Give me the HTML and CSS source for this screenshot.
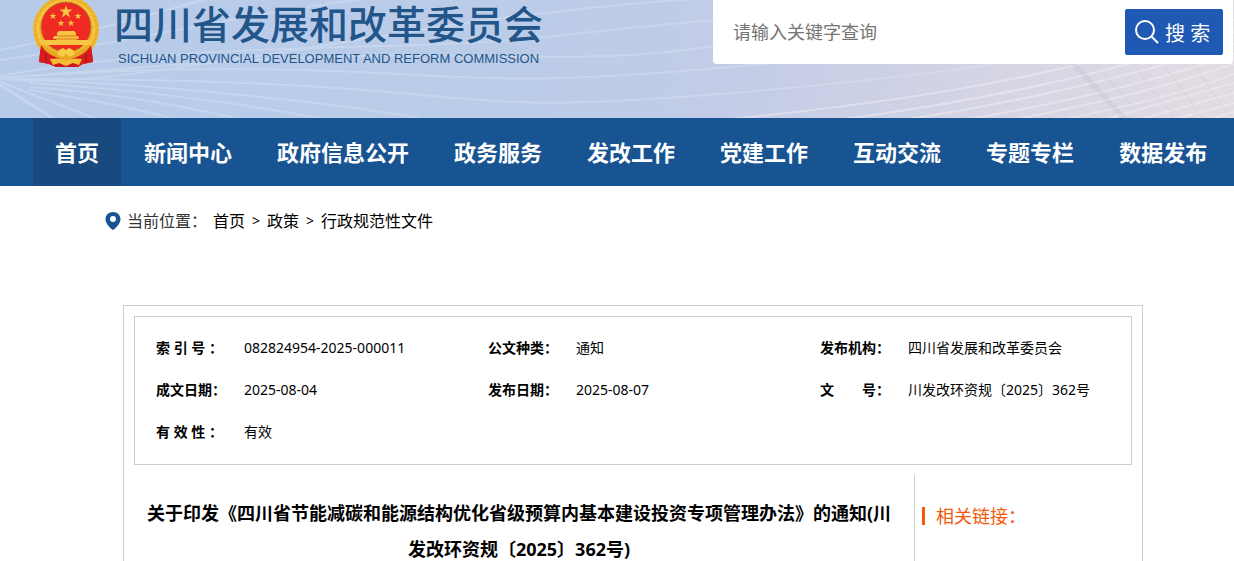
FILE: index.html
```html
<!DOCTYPE html>
<html lang="zh-CN">
<head>
  <meta charset="UTF-8">
  <meta name="viewport" content="width=device-width, initial-scale=1.0">
  <title>四川省发展和改革委员会</title>
  <link rel="stylesheet" href="styles.css">
</head>
<body>

  <!-- Header: logo and search -->
  <header class="header">
    <svg class="header-bg" viewBox="0 0 1234 118" preserveAspectRatio="none" aria-hidden="true">
      <g fill="none" stroke="#dfeaf8" stroke-width="2" opacity="0.35">
        <path d="M0 78 C60 90 200 65 420 30 S800 -5 960 -20"/>
        <path d="M0 60 C150 40 250 10 420 -8"/>
        <path d="M0 50 C80 35 150 15 220 -5"/>
        <path d="M0 76 C140 50 300 48 420 45 S600 28 720 20 S1100 -10 1234 -40"/>
        <path d="M0 78 C160 66 300 52 480 56 S680 50 800 34 S1100 0 1234 -20"/>
        <path d="M0 78 C160 66 300 68 400 74 S560 82 720 68 S1100 30 1234 -8"/>
        <path d="M0 79 C160 78 300 84 400 93 S540 109 720 94 S1080 60 1234 10"/>
        <path d="M30 80 C140 84 300 98 420 118"/>
        <path d="M30 83 C120 88 240 102 340 122"/>
        <path d="M30 87 C100 92 180 104 260 124"/>
        <path d="M30 90 C80 98 140 108 190 124"/>
        <path d="M0 82 L110 124"/>
        <path d="M0 85 L56 120" stroke-width="3"/>
      </g>
      <g fill="none" stroke="#f3eff4" stroke-width="2" opacity="0.5">
        <path d="M700 122 C880 105 1060 80 1234 20"/>
        <path d="M820 122 C960 105 1110 75 1234 32"/>
        <path d="M890 122 C1010 104 1130 77 1234 44"/>
        <path d="M950 122 C1050 106 1150 83 1234 54"/>
        <path d="M1000 122 C1090 106 1160 89 1234 64"/>
        <path d="M1050 122 C1120 108 1180 95 1234 74"/>
        <path d="M1095 122 L1234 83"/>
        <path d="M1130 122 L1234 93"/>
        <path d="M1165 122 L1234 103"/>
        <path d="M1200 122 L1234 112"/>
      </g>
      <g fill="none" stroke="#aeb0c6" opacity="0.2">
        <path d="M1070 60 L1126 120" stroke-width="5"/>
        <path d="M1092 60 L1144 120M1130 60 L1176 120M1160 60 L1204 120M1190 60 L1230 116"/>
      </g>
    </svg>

    <a class="logo" href="#">
      <svg class="emblem" viewBox="0 0 68 70" aria-hidden="true">
        <path d="M9 45 L7 64 L17 66 L24 69 L46 69 L51 66 L61 64 L59 45 Z" fill="#c9171b"/>
        <circle cx="34" cy="31" r="33" fill="#f0b62f"/>
        <circle cx="34" cy="31" r="31" fill="none" stroke="#e0a323" stroke-dasharray="2 3"/>
        <circle cx="34" cy="31" r="28" fill="none" stroke="#f8ca47" stroke-width="2" stroke-dasharray="5 1"/>
        <circle cx="34" cy="29" r="25" fill="#ee2a22" stroke="#b9801c"/>
        <path fill="#f6c543" d="M34 7 L35.5 11.500 L40.5 11.500 L36.5 14.500 L38 19.500 L34 16.500 L30 19.500 L31.5 14.500 L27.5 11.500 L32.5 11.500 Z"/>
        <g fill="#f6c543">
          <path id="star" d="M21 14.500 L21.8 17 L24.500 17 L22.400 18.600 L23.200 21.200 L21 19.600 L18.800 21.200 L19.600 18.600 L17.500 17 L20.200 17 Z"/>
          <use href="#star" x="25"/>
          <use href="#star" x="8" y="7"/>
          <use href="#star" x="18" y="7"/>
        </g>
        <path fill="#f6c543" d="M25 35 L27 33 H42 L44 35 V38 H25 Z M22 38 H46 L47 41 H21 Z M24 41 H45 V42 H58 L56 47 H12 L10 42 H24 Z"/>
        <path d="M25 38 H44 M24 41 H45" stroke="#d6781b"/>
        <path fill="#e9a823" d="M11 46 C17 53 26 56 34 56 S51 53 57 46 L58 51 C52 59 43 62 34 62 S16 59 10 51 Z"/>
        <path fill="#f8cc45" d="M27 52 L31 50 L34 52 L37 50 L41 52 L43 56 L38 59 L34 56 L30 59 L25 56 Z"/>
        <path fill="#d81d1e" d="M9 47 C14 56 23 59 29 61 L24 69 L17 66 L7 64 Z M59 47 C54 56 45 59 39 61 L44 69 L51 66 L61 64 Z"/>
        <path fill="#f5bd35" d="M18 61 C25 60 29 60 34 64 C39 60 43 60 50 61 L47 67 L41 65 L34 68 L27 65 L21 67 Z"/>
        <path d="M14 56 V65 M54 56 V65" stroke="#98131a"/>
      </svg>
      <span class="logo-text">
        <span class="logo-cn">四川省发展和改革委员会</span>
        <span class="logo-en">SICHUAN PROVINCIAL DEVELOPMENT AND REFORM COMMISSION</span>
      </span>
    </a>

    <form class="search">
      <input class="search-input" type="text" placeholder="请输入关键字查询" aria-label="请输入关键字查询">
      <button class="search-btn" type="submit">
        <svg class="search-icon" viewBox="0 0 24 24" aria-hidden="true">
          <circle cx="10" cy="10" r="9"/>
          <path d="M16.5 16.5 L23 23"/>
        </svg>
        搜 索
      </button>
    </form>
  </header>

  <!-- Main navigation -->
  <nav class="nav">
    <a class="active" href="#">首页</a>
    <a href="#">新闻中心</a>
    <a href="#">政府信息公开</a>
    <a href="#">政务服务</a>
    <a href="#">发改工作</a>
    <a href="#">党建工作</a>
    <a href="#">互动交流</a>
    <a href="#">专题专栏</a>
    <a href="#">数据发布</a>
  </nav>

  <!-- Breadcrumb -->
  <div class="crumbs">
    <svg class="pin" viewBox="0 0 16 18" aria-hidden="true">
      <path fill="#185392" fill-rule="evenodd" d="M8 0 C3.500 0 .5 3.200 .5 7.200 C.5 11 4 15 8 18 C12 15 15.500 11 15.500 7.200 C15.500 3.200 12.500 0 8 0 Z M8 4 A3 3 0 1 1 8 10 A3 3 0 1 1 8 4 Z"/>
    </svg>
    <span class="crumbs-label">当前位置：</span>
    <span class="crumbs-path">
      <a href="#">首页</a>
      <span class="sep">&gt;</span>
      <a href="#">政策</a>
      <span class="sep">&gt;</span>
      <a href="#">行政规范性文件</a>
    </span>
  </div>

  <main class="doc">
    <!-- Document details -->
    <div class="info">
      <table class="info-table">
        <colgroup>
          <col class="col-label"><col>
          <col class="col-label"><col>
          <col class="col-label"><col>
        </colgroup>
        <tr>
          <th scope="row">索 引 号 ：</th>
          <td>082824954-2025-000011</td>
          <th scope="row">公文种类：</th>
          <td>通知</td>
          <th scope="row">发布机构：</th>
          <td>四川省发展和改革委员会</td>
        </tr>
        <tr>
          <th scope="row">成文日期：</th>
          <td>2025-08-04</td>
          <th scope="row">发布日期：</th>
          <td>2025-08-07</td>
          <th scope="row">文　　号：</th>
          <td>川发改环资规〔2025〕362号</td>
        </tr>
        <tr>
          <th scope="row">有 效 性 ：</th>
          <td>有效</td>
        </tr>
      </table>
    </div>

    <div class="doc-body">
      <article class="article">
        <h1>关于印发《四川省节能减碳和能源结构优化省级预算内基本建设投资专项管理办法》的通知(川发改环资规〔2025〕362号)</h1>
      </article>
      <aside class="related">
        <h2>相关链接：</h2>
      </aside>
    </div>
  </main>

</body>
</html>
```
FILE: styles.css
```css
* {
  box-sizing: border-box;
}

body {
  display: flex;
  flex-direction: column;
  min-height: 100vh;
  margin: 0;
  background-color: #fff;
  color: #000;
  font-family: "Noto Sans", "Noto Sans CJK SC", sans-serif;
  font-size: 14px;
}

a {
  color: inherit;
  text-decoration: none;
}

/* Header */
.header {
  position: relative;
  display: flex;
  justify-content: space-between;
  align-items: flex-start;
  height: 118px;
  padding: 0 1px 0 32px;
  background: linear-gradient(100deg, #b6cbe9 0%, #bccce8 45%, #c3cce6 60%, #d6d5e4 82%, #e3dce2 100%);
}

.header-bg {
  position: absolute;
  top: 0;
  left: 0;
  width: 100%;
  height: 100%;
}

.logo {
  position: relative;
  display: flex;
  gap: 14px;
  color: #225589;
}

.emblem {
  width: 68px;
  height: 70px;
  margin-top: -2px;
}

.logo-text {
  display: flex;
  flex-direction: column;
  gap: 6px;
  white-space: nowrap;
}

.logo-cn {
  font-family: "Noto Sans CJK SC", sans-serif;
  font-size: 39px;
  font-weight: 500;
  line-height: 44px;
}

.logo-en {
  padding-left: 4px;
  font-family: "Liberation Sans", Arial, sans-serif;
  font-size: 13px;
  line-height: 18px;
}

.search {
  position: relative;
  display: flex;
  width: 520px;
  height: 64px;
  padding: 9px 10px 9px 20px;
  border-radius: 0 0 4px 4px;
  background-color: #fff;
}

.search-input {
  flex: 1;
  min-width: 0;
  padding: 0;
  border: 0;
  outline: none;
  background: none;
  font-family: inherit;
  font-size: 18px;
}

.search-input::placeholder {
  color: #757575;
}

.search-btn {
  display: flex;
  align-items: center;
  gap: 6px;
  width: 98px;
  padding: 0 0 0 10px;
  border: 0;
  border-radius: 2px;
  background-color: #2059b3;
  color: #fff;
  font-family: inherit;
  font-size: 20px;
  white-space: nowrap;
}

.search-icon {
  width: 24px;
  height: 24px;
  fill: none;
  stroke: #fff;
  stroke-width: 2;
}

/* Navigation */
.nav {
  display: flex;
  gap: 1px;
  padding-left: 33px;
  background-color: #185392;
}

.nav a {
  padding: 0 22px;
  color: #fff;
  font-size: 22px;
  font-weight: bold;
  line-height: 68px;
  white-space: nowrap;
}

.nav a.active {
  background-color: #184a80;
}

/* Breadcrumb */
.crumbs {
  display: flex;
  align-items: center;
  gap: 6px;
  padding: 20px 105px;
  font-size: 16px;
  line-height: 30px;
}

.pin {
  width: 16px;
  height: 18px;
}

.crumbs-label {
  color: #333;
}

.crumbs-path {
  display: flex;
  gap: 7px;
}

.sep {
  font-size: 14px;
}

/* Document box */
.doc {
  display: flex;
  flex: 1;
  flex-direction: column;
  margin: 49px 91px 0 123px;
  padding-top: 10px;
  border: 1px solid #ccc;
  border-bottom: 0;
}

.info {
  margin: 0 10px 10px;
  padding: 10px 0 11px;
  border: 1px solid #ccc;
}

.info-table {
  width: 100%;
  border-collapse: collapse;
  table-layout: fixed;
}

.col-label {
  width: 109px;
}

.info-table th,
.info-table td {
  height: 42px;
  padding: 0;
  line-height: 20px;
  text-align: left;
  white-space: nowrap;
}

.info-table th {
  padding-left: 21px;
}

.doc-body {
  display: flex;
  flex: 1;
}

.article {
  flex: 1;
  padding: 20px 20px 0;
}

.article h1 {
  margin: 0;
  font-size: 18px;
  line-height: 36px;
  text-align: center;
}

.related {
  width: 228px;
  padding: 32px 8px 0 7px;
  border-left: 1px solid #ccc;
}

.related h2 {
  margin: 0;
  padding-left: 11px;
  border-left: 3px solid #f25a0b;
  color: #f25a0b;
  font-size: 18px;
  font-weight: normal;
  line-height: 18px;
}
```
